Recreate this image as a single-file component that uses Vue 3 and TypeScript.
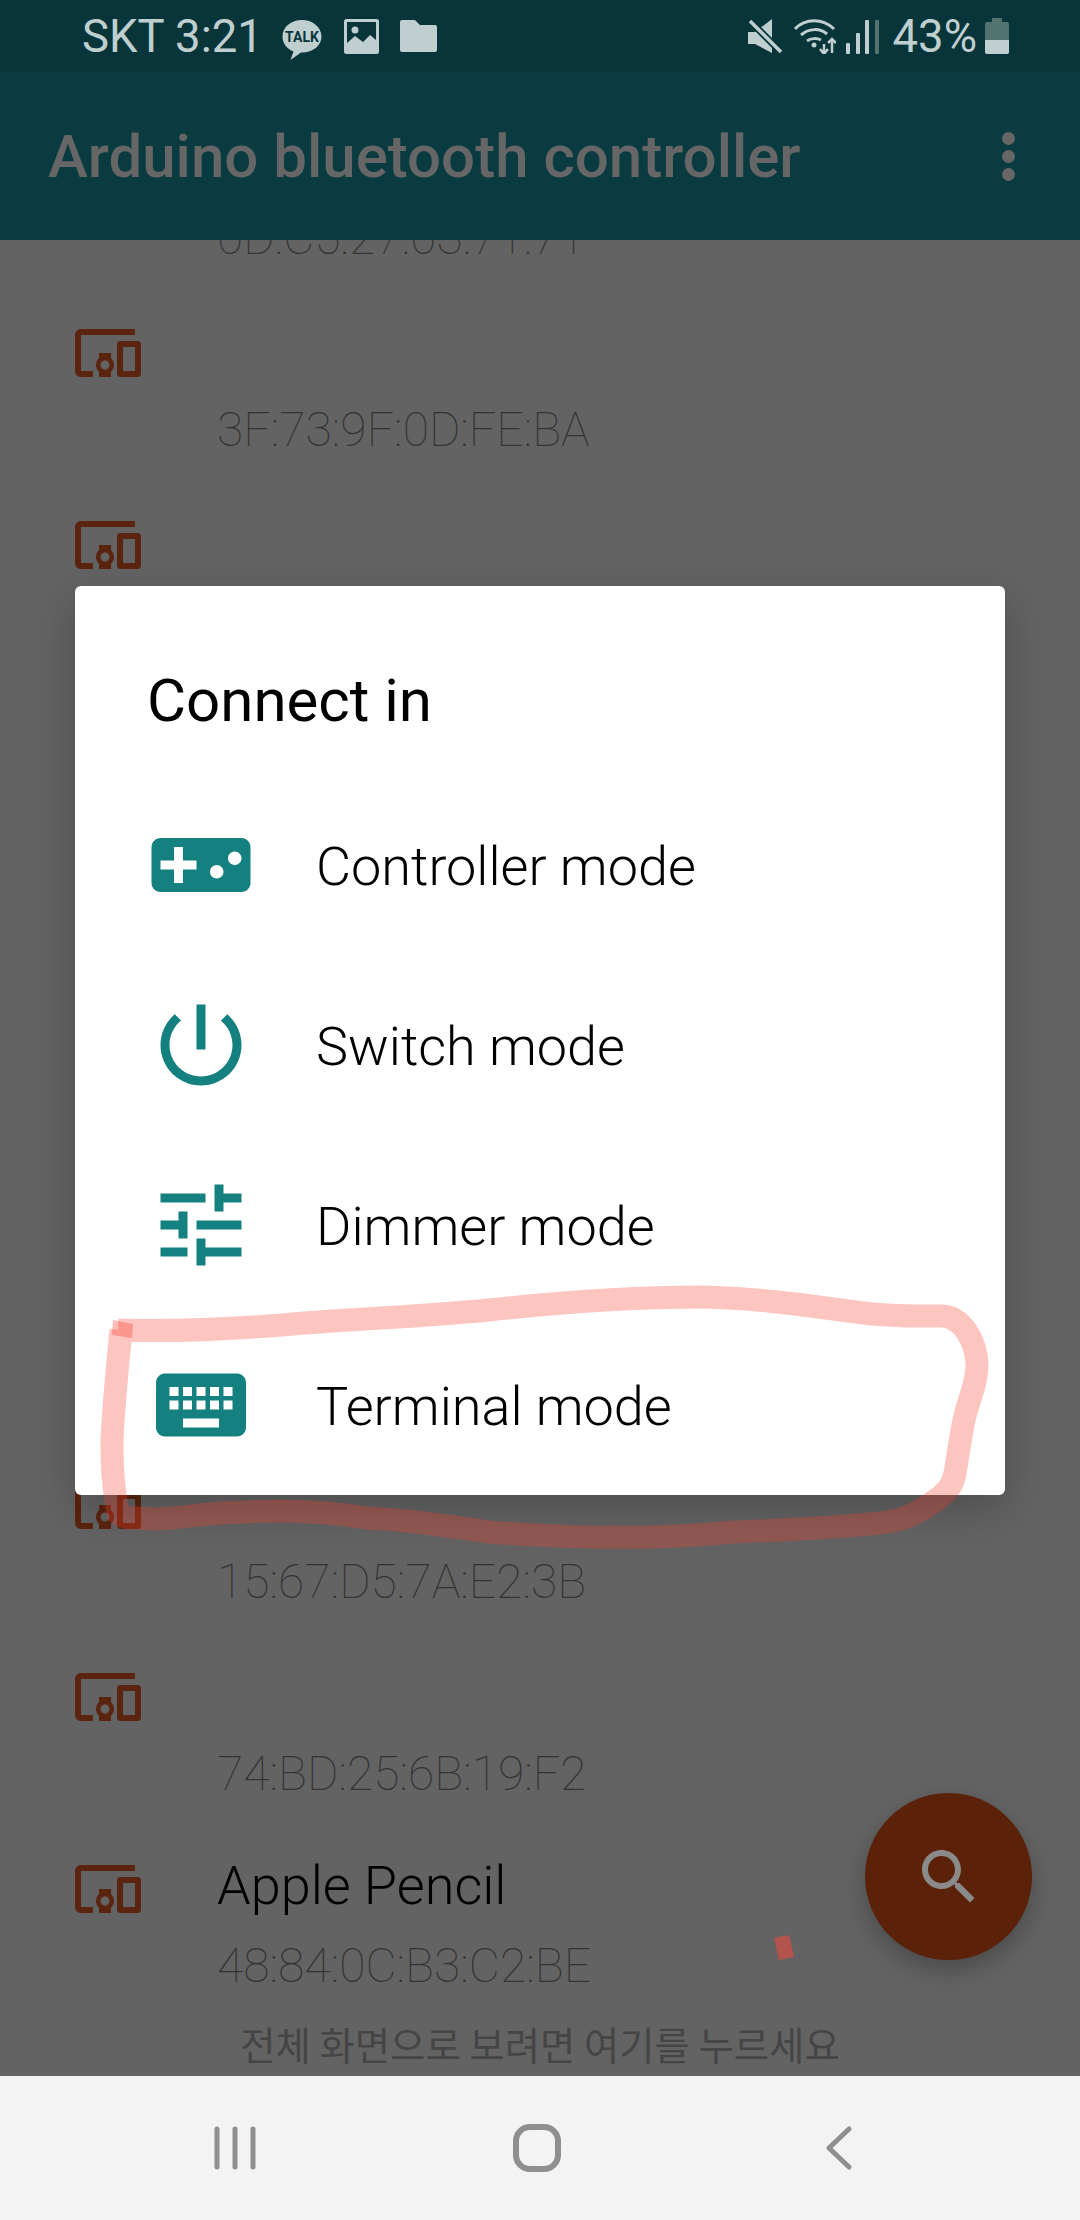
<template>
  <div class="screen">
    <header class="status-bar">
      <div class="status-left">
        <span class="status-text">SKT 3:21</span>
        <svg class="ic-talk" width="42" height="44" viewBox="0 0 42 44">
          <path d="M21 2C10 2 1.500 9 1.500 18.500c0 7 4.500 12.500 11 15L9.500 42l10.500-7.500h1c11 0 19.500-7 19.500-16S32 2 21 2z" fill="#bfcfcf" />
          <text x="21" y="24" text-anchor="middle" class="talk-label">TALK</text>
        </svg>
        <svg class="ic-image" width="35" height="35" viewBox="0 0 35 35">
          <rect width="35" height="35" rx="2.500" fill="#bfcfcf" />
          <rect x="3" y="3" width="29" height="29" fill="#07353a" />
          <circle cx="11" cy="11" r="3.500" fill="#bfcfcf" />
          <path d="M3 24l8-7 8 6 7-7 6 5v11H3z" fill="#bfcfcf" />
        </svg>
        <svg class="ic-folder" width="37" height="32" viewBox="0 0 37 32">
          <path d="M2 0h13l5 5h15a2 2 0 0 1 2 2v23a2 2 0 0 1-2 2H2a2 2 0 0 1-2-2V2a2 2 0 0 1 2-2z" fill="#bfcfcf" />
        </svg>
      </div>
      <div class="status-right">
        <svg class="ic-mute" width="34" height="34" viewBox="0 0 34 34">
          <path d="M0 13h7L24 0v28zM0 13v12h7l17 9V28z" fill="#bfcfcf" />
          <path d="M1 1l31 31" stroke="#07353a" stroke-width="7" />
          <path d="M2 2l31 31" stroke="#bfcfcf" stroke-width="3.500" />
        </svg>
        <svg class="ic-wifi" width="42" height="36" viewBox="0 0 42 36" fill="none" stroke="#bfcfcf" stroke-width="3">
          <path d="M1 11C11 0 29 0 40 11" />
          <path d="M7 17c8-7 19-7 26-1" />
          <path d="M13 23c4-3 10-3 14-1" />
          <circle cx="20" cy="27" r="2.500" fill="#bfcfcf" stroke="none" />
          <path d="M30 36V26M26 31l4 5 4-5" stroke-width="2.500" />
          <path d="M38 35V21M34 25l4-4 4 4" stroke-width="2.500" />
        </svg>
        <div class="signal">
          <i v-for="bar in signalBars" :key="bar.height" :class="{ off: bar.off }" :style="{ height: bar.height + 'px' }"></i>
        </div>
        <span class="status-text battery-level">43%</span>
        <div class="battery"><i></i></div>
      </div>
    </header>

    <div class="app-bar">
      <h1 class="app-title">Arduino bluetooth controller</h1>
      <div class="overflow-menu"><i></i><i></i><i></i></div>
    </div>

    <main class="device-area">
      <ul class="device-list">
        <li v-for="(device, i) in devices" :key="i" class="device-row">
          <svg class="device-icon" width="72" height="72" viewBox="0 0 24 24">
            <path fill="#5b2410" d="M3 6h18V4H3c-1.100 0-2 .9-2 2v12c0 1.100.9 2 2 2h4v-2H3V6zm10 6H9v1.780c-.61.55-1 1.330-1 2.220s.39 1.670 1 2.220V20h4v-1.780c.61-.55 1-1.340 1-2.220s-.39-1.670-1-2.220V12zm-2 5.500c-.83 0-1.500-.67-1.500-1.500s.67-1.500 1.500-1.500 1.500.67 1.500 1.500-.67 1.500-1.500 1.500zM22 8h-6c-.5 0-1 .5-1 1v10c0 .5.5 1 1 1h6c.5 0 1-.5 1-1V9c0-.5-.5-1-1-1zm-1 10h-4v-8h4v8z" />
          </svg>
          <div class="device-text">
            <div class="device-name">{{ device.name }}</div>
            <div class="device-address">{{ device.address }}</div>
          </div>
        </li>
      </ul>

      <button class="fab">
        <svg width="72" height="72" viewBox="0 0 24 24">
          <path fill="#8a8a8a" d="M15.500 14h-.79l-.28-.27C15.410 12.590 16 11.110 16 9.500 16 5.910 13.090 3 9.500 3S3 5.910 3 9.500 5.910 16 9.500 16c1.610 0 3.090-.59 4.230-1.570l.27.28v.79l5 4.990L20.490 19l-4.990-5zm-6 0C7.010 14 5 11.990 5 9.500S7.010 5 9.500 5 14 7.010 14 9.500 11.990 14 9.500 14z" />
        </svg>
      </button>

      <p class="fullscreen-hint">전체 화면으로 보려면 여기를 누르세요</p>
    </main>

    <nav class="nav-bar">
      <div class="nav-item">
        <svg width="42" height="44" viewBox="0 0 42 44" fill="none" stroke="#8f8f8f" stroke-width="5" stroke-linecap="round">
          <path d="M3 3v38M21 3v38M39 3v38" />
        </svg>
      </div>
      <div class="nav-item">
        <svg width="48" height="48" viewBox="0 0 48 48" fill="none" stroke="#8f8f8f" stroke-width="6">
          <rect x="3" y="3" width="42" height="42" rx="14" />
        </svg>
      </div>
      <div class="nav-item">
        <svg width="26" height="44" viewBox="0 0 26 44" fill="none" stroke="#8f8f8f" stroke-width="5" stroke-linecap="round" stroke-linejoin="round">
          <path d="M23 3L3 22l20 19" />
        </svg>
      </div>
    </nav>

    <section class="dialog">
      <h2 class="dialog-title">Connect in</h2>
      <div v-for="mode in modes" :key="mode.label" class="mode-row">
        <svg width="108" height="108" viewBox="0 0 24 24">
          <path fill="#14807f" :d="mode.icon" />
        </svg>
        <span>{{ mode.label }}</span>
      </div>
    </section>

    <!-- hand drawn marker on top of the screenshot -->
    <svg class="marker" viewBox="0 0 1080 2220" fill="none">
      <path
        d="M118 1330C180 1332 250 1328 305 1323C370 1318 430 1316 489 1310C580 1300 650 1297 703 1297C750 1298 790 1303 856 1312C890 1317 920 1316 942 1316C962 1317 976 1340 977 1365C977 1385 968 1400 964 1420C960 1440 958 1455 955 1473C953 1485 948 1490 940 1497C915 1516 900 1521 880 1523C830 1528 790 1530 734 1532C690 1536 650 1538 611 1537C570 1538 530 1535 489 1532C440 1525 410 1520 366 1518C320 1510 280 1510 244 1512C200 1512 170 1522 140 1518C128 1518 122 1518 118 1513C112 1480 112 1460 112 1440C114 1400 118 1360 121 1330"
        stroke="rgba(245, 62, 48, 0.3)"
        stroke-width="23"
        stroke-linejoin="round"
        stroke-linecap="butt"
      />
      <path d="M113 1320l20 4-1 14-20-3z" fill="rgba(245, 62, 48, 0.35)" />
      <path d="M774 1938l15-3 5 22-15 3z" fill="#b3534d" />
    </svg>
  </div>
</template>

<script setup lang="ts">
interface Device {
  name: string
  address: string
}

interface Mode {
  label: string
  icon: string
}

const devices: Device[] = [
  { name: '', address: '0D:C5:27:03:71:71' },
  { name: '', address: '3F:73:9F:0D:FE:BA' },
  { name: '', address: '' },
  { name: '', address: '' },
  { name: '', address: '' },
  { name: '', address: '' },
  { name: '', address: '' },
  { name: '', address: '15:67:D5:7A:E2:3B' },
  { name: '', address: '74:BD:25:6B:19:F2' },
  { name: 'Apple Pencil', address: '48:84:0C:B3:C2:BE' }
]

const modes: Mode[] = [
  {
    label: 'Controller mode',
    icon: 'M21 6H3c-1.100 0-2 .9-2 2v8c0 1.100.9 2 2 2h18c1.100 0 2-.9 2-2V8c0-1.100-.9-2-2-2zm-10 7H8v3H6v-3H3v-2h3V8h2v3h3v2zm4.500 2c-.83 0-1.500-.67-1.500-1.500s.67-1.500 1.500-1.500 1.500.67 1.500 1.500-.67 1.500-1.500 1.500zm4-3c-.83 0-1.500-.67-1.500-1.500S18.670 9 19.500 9s1.500.67 1.500 1.500-.67 1.500-1.500 1.500z'
  },
  {
    label: 'Switch mode',
    icon: 'M13 3h-2v10h2V3zm4.830 2.170l-1.420 1.420C17.990 7.860 19 9.810 19 12c0 3.870-3.130 7-7 7s-7-3.130-7-7c0-2.190 1.010-4.140 2.580-5.420L6.170 5.170C4.230 6.820 3 9.260 3 12c0 4.970 4.030 9 9 9s9-4.030 9-9c0-2.740-1.230-5.180-3.170-6.830z'
  },
  {
    label: 'Dimmer mode',
    icon: 'M3 17v2h6v-2H3zM3 5v2h10V5H3zm10 16v-2h8v-2h-8v-2h-2v6h2zM7 9v2H3v2h4v2h2V9H7zm14 4v-2H11v2h10zm-6-4h2V7h4V5h-4V3h-2v6z'
  },
  {
    label: 'Terminal mode',
    icon: 'M20 5H4c-1.100 0-1.990.9-1.990 2L2 17c0 1.100.9 2 2 2h16c1.100 0 2-.9 2-2V7c0-1.100-.9-2-2-2zm-9 3h2v2h-2V8zm0 3h2v2h-2v-2zM8 8h2v2H8V8zm0 3h2v2H8v-2zm-1 2H5v-2h2v2zm0-3H5V8h2v2zm9 7H8v-2h8v2zm0-4h-2v-2h2v2zm0-3h-2V8h2v2zm3 3h-2v-2h2v2zm0-3h-2V8h2v2z'
  }
]

const signalBars = [
  { height: 11, off: false },
  { height: 21, off: false },
  { height: 34, off: false },
  { height: 44, off: true }
]
</script>

<style>
body {
  overflow: hidden;
}
</style>

<style scoped>
.screen {
  position: relative;
  display: flex;
  flex-direction: column;
  width: 1080px;
  height: 2220px;
  overflow: hidden;
  background: #636363;
  font-family: Roboto, "Noto Sans CJK KR", sans-serif;
}

.status-bar {
  display: flex;
  align-items: center;
  justify-content: space-between;
  flex: none;
  height: 72px;
  padding: 0 71px 0 82px;
  box-sizing: border-box;
  background: #07353a;
  position: relative;
  z-index: 2;
}

.status-left,
.status-right {
  display: flex;
  align-items: center;
}

.status-left {
  gap: 21px;
}

.status-text {
  font-size: 45.500px;
  font-weight: 400;
  color: #bfcfcf;
}

.talk-label {
  font-family: Roboto, sans-serif;
  font-size: 14px;
  font-weight: 700;
  fill: #07353a;
}

.ic-talk {
  margin: 8px 0 0 -3px;
}

.ic-wifi {
  margin-left: 12px;
}

.signal {
  display: flex;
  align-items: flex-end;
  gap: 5.500px;
  height: 34px;
  margin: 2px 0 0 10px;
}

.signal i {
  display: block;
  width: 4px;
  max-height: 34px;
  background: #bfcfcf;
  border-radius: 1px;
}

.signal i.off {
  background: #527370;
}

.battery-level {
  margin-left: 14px;
}

.battery {
  position: relative;
  width: 24px;
  height: 32px;
  margin: 3px 0 0 8px;
  background: #527370;
  border-radius: 2px;
}

.battery::before {
  content: "";
  position: absolute;
  top: -4px;
  left: 7px;
  width: 10px;
  height: 4px;
  background: #527370;
}

.battery i {
  position: absolute;
  left: 0;
  right: 0;
  bottom: 0;
  height: 14px;
  background: #bfcfcf;
  border-radius: 0 0 2px 2px;
}

.app-bar {
  display: flex;
  align-items: center;
  justify-content: space-between;
  flex: none;
  height: 168px;
  padding: 0 65px 0 48px;
  box-sizing: border-box;
  background: #0a3b40;
  position: relative;
  z-index: 2;
}

.app-title {
  margin: 0;
  font-size: 60px;
  font-weight: 500;
  color: #666;
}

.overflow-menu {
  display: flex;
  flex-direction: column;
  gap: 5px;
}

.overflow-menu i {
  display: block;
  width: 13px;
  height: 13px;
  border-radius: 50%;
  background: #666;
}

.device-area {
  position: relative;
  flex: 1;
  min-height: 0;
}

.device-list {
  list-style: none;
  margin: -175px 0 0;
  padding: 0;
}

.device-row {
  display: flex;
  align-items: center;
  height: 192px;
  padding-left: 72px;
  box-sizing: border-box;
}

.device-icon {
  flex: none;
}

.device-text {
  align-self: flex-start;
  padding: 57px 0 0 73px;
}

.device-name {
  height: 72px;
  font-size: 54px;
  font-weight: 300;
  line-height: 72px;
  color: #000;
}

.device-address {
  height: 64px;
  margin-top: 12px;
  font-size: 48px;
  font-weight: 100;
  line-height: 64px;
  color: #333;
}

.fab {
  position: absolute;
  top: 1553px;
  left: 865px;
  display: flex;
  align-items: center;
  justify-content: center;
  width: 167px;
  height: 167px;
  padding: 0;
  border: none;
  border-radius: 50%;
  background: #5b2109;
  box-shadow: 0 10px 24px rgba(0, 0, 0, 0.25);
}

.fullscreen-hint {
  position: absolute;
  left: 0;
  right: 0;
  top: 1779px;
  margin: 0;
  text-align: center;
  font-family: "Noto Sans CJK KR", sans-serif;
  font-size: 38.400px;
  line-height: 48px;
  color: #454545;
}

.nav-bar {
  display: grid;
  grid-template-columns: repeat(3, 302px);
  flex: none;
  height: 144px;
  padding-left: 84px;
  box-sizing: border-box;
  background: #f3f3f3;
  position: relative;
  z-index: 2;
}

.nav-item {
  display: flex;
  align-items: center;
  justify-content: center;
}

.dialog {
  position: absolute;
  top: 586px;
  left: 75px;
  z-index: 3;
  width: 930px;
  height: 909px;
  background: #fff;
  border-radius: 6px;
  box-shadow: 0 14px 44px rgba(0, 0, 0, 0.22);
}

.dialog-title {
  height: 189px;
  margin: 0;
  padding: 79px 0 0 72px;
  box-sizing: border-box;
  font-size: 60px;
  font-weight: 400;
  line-height: 72px;
  color: #000;
}

.mode-row {
  display: flex;
  align-items: center;
  gap: 61px;
  height: 180px;
  padding: 2px 0 0 72px;
  box-sizing: border-box;
  font-size: 54px;
  font-weight: 300;
  color: #000;
}

.mode-row svg {
  margin-top: -2px;
}

.marker {
  position: absolute;
  top: 0;
  left: 0;
  z-index: 4;
  width: 1080px;
  height: 2220px;
  pointer-events: none;
}
</style>
